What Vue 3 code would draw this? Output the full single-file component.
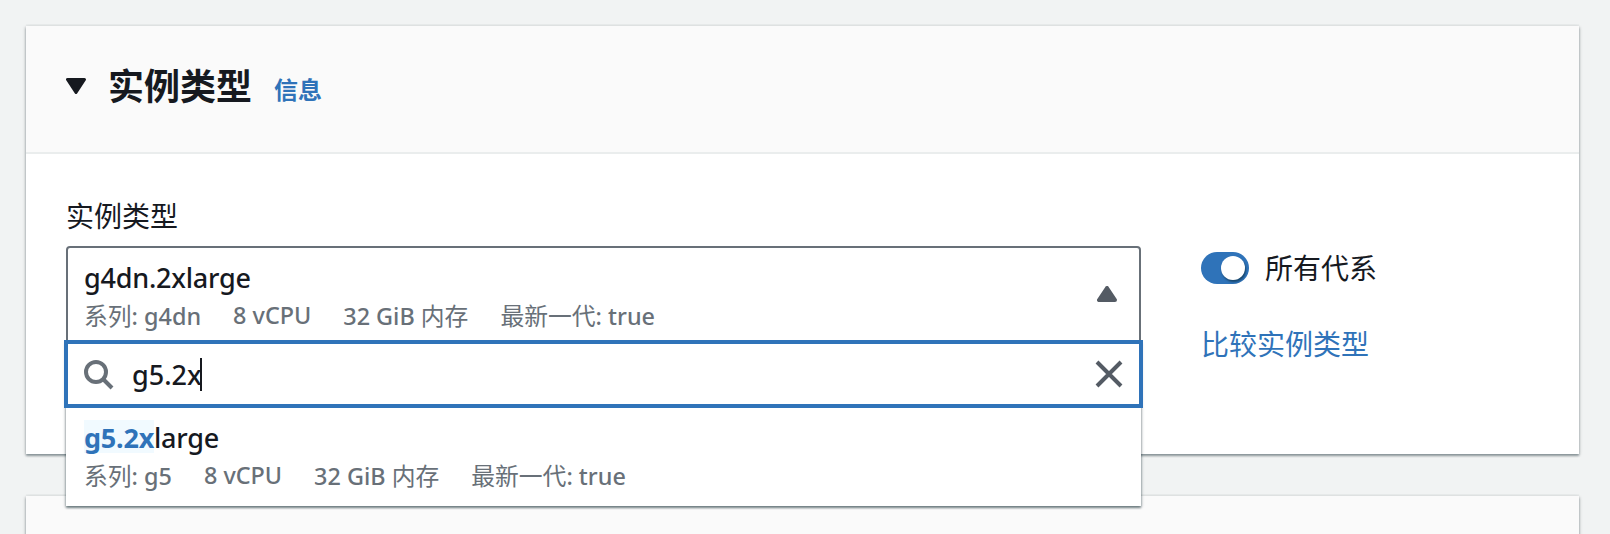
<script setup>
import { ref } from 'vue'

const query = ref('g5.2x')
const rest = 'large'
const selected = {
  name: 'g4dn.2xlarge',
  tags: [
    [{ cjk: '系列' }, { latin: ': g4dn' }],
    [{ latin: '8 vCPU' }],
    [{ latin: '32 GiB ' }, { cjk: '内存' }],
    [{ cjk: '最新一代' }, { latin: ': true' }],
  ],
}
const optionTags = [[{ cjk: '系列' }, { latin: ': g5' }], ...selected.tags.slice(1)]
</script>

<template>
  <main class="page">
    <section class="card first">
      <header class="card-header">
        <svg class="caret" width="20" height="16" viewBox="0 0 20 16"><path d="M1.5 1.5H18.5L10 14.5Z" fill="#16191f" stroke="#16191f" stroke-width="3" stroke-linejoin="round" /></svg>
        <h2>实例类型</h2>
        <a class="info">信息</a>
      </header>
      <div class="card-body">
        <div class="field">
          <label>实例类型</label>
          <div class="select">
            <div class="trigger">
              <div class="option-text">
                <div class="name">{{ selected.name }}</div>
                <div class="tags">
                  <span v-for="(tag, i) in selected.tags" :key="i" class="tag"><span v-for="(part, j) in tag" :key="j" :class="part.cjk ? 'cjk' : 'latin'">{{ part.cjk || part.latin }}</span></span>
                </div>
              </div>
              <svg class="up" width="20" height="16" viewBox="0 0 20 16"><path d="M2 14H18L10 2Z" fill="#545b64" stroke="#545b64" stroke-width="4" stroke-linejoin="round" /></svg>
            </div>
            <div class="dropdown">
              <div class="search">
                <svg class="glass" width="30" height="30" viewBox="0 0 30 30" fill="none" stroke="#687078" stroke-width="4"><circle cx="12" cy="12" r="10" /><path d="M19 19L28 28" /></svg>
                <span class="query">{{ query }}</span><i class="cursor"></i>
                <svg class="close" width="28" height="28" viewBox="0 0 28 28" fill="none" stroke="#545b64" stroke-width="4"><path d="M2 2L26 26M26 2L2 26" /></svg>
              </div>
              <div class="option">
                <div class="name"><mark>{{ query }}</mark>{{ rest }}</div>
                <div class="tags">
                  <span v-for="(tag, i) in optionTags" :key="i" class="tag"><span v-for="(part, j) in tag" :key="j" :class="part.cjk ? 'cjk' : 'latin'">{{ part.cjk || part.latin }}</span></span>
                </div>
              </div>
            </div>
          </div>
        </div>
        <aside class="side">
          <div class="toggle-row"><span class="toggle"><span class="knob"></span></span><span class="toggle-label">所有代系</span></div>
          <a class="compare">比较实例类型</a>
        </aside>
      </div>
    </section>
    <section class="card second"></section>
  </main>
</template>

<style>
body { background: #f2f3f3; overflow: hidden; }
</style>

<style scoped>
* { box-sizing: border-box; }
.page {
  height: 534px;
  overflow: hidden;
  padding: 26px 31px 0 26px;
  background: #f1f3f3;
  color: #16191f;
  font-family: "Noto Sans", "Noto Sans CJK SC", sans-serif;
}
.card {
  background: #fff;
  box-shadow: 0 2px 2px 0 rgba(0, 28, 36, 0.3), 1px 1px 3px 0 rgba(0, 28, 36, 0.15), -1px 1px 3px 0 rgba(0, 28, 36, 0.15), 0 -2px 0 0 #eaeded;
}
.first { height: 428px; }
.second { height: 80px; margin-top: 42px; background: #fafafa; }
.card-header {
  display: flex;
  height: 128px;
  padding-left: 40px;
  background: #fafafa;
  border-bottom: 2px solid #eaeded;
}
.caret { margin-top: 52px; }
h2 { margin: 32px 0 0 22px; font: 700 36px/52px "Noto Sans CJK SC", sans-serif; width: 144px; white-space: nowrap; }
.info { margin: 45px 0 0 22px; font: 700 24px/36px "Noto Sans CJK SC", sans-serif; color: #2f73b9; }
.card-body { display: flex; padding-left: 40px; }
.field { width: 1075px; }
label { display: block; margin-top: 41px; height: 51px; font: 400 28px/40px "Noto Sans CJK SC", sans-serif; }
.select { position: relative; }
.trigger {
  display: flex;
  justify-content: space-between;
  height: 98px;
  padding: 12px 22px 0 16px;
  border: 2px solid #687078;
  border-radius: 4px;
}
.name { font-size: 27px; line-height: 36px; font-weight: 500; letter-spacing: -0.22px; white-space: nowrap; }
.tags { display: flex; gap: 32px; height: 36px; margin-top: 1px; line-height: 36px; color: #687078; white-space: pre; }
.tag { display: flex; align-items: baseline; }
.cjk { font: 400 23.8px/36px "Noto Sans CJK SC", sans-serif; }
.latin { font-size: 23.4px; line-height: 36px; font-weight: 500; }
.up { margin-top: 26px; }
.dropdown {
  position: absolute;
  top: 96px;
  left: 0;
  width: 1075px;
  height: 164px;
  background: #fff;
  box-shadow: 0 2px 2px 0 rgba(0, 28, 36, 0.4), 1px 1px 3px 0 rgba(0, 28, 36, 0.2), -1px 1px 3px 0 rgba(0, 28, 36, 0.2);
}
.search {
  display: flex;
  width: 1079px;
  height: 68px;
  margin: -2px -2px 0;
  padding: 0 16px 0 16px;
  border: 4px solid #2f73b9;
  background: #fff;
}
.glass { margin-top: 16px; }
.query { margin: 12px 0 0 18px; font-size: 27px; line-height: 38px; font-weight: 500; }
.cursor { width: 2px; height: 33px; margin: 14px auto 0 -2px; background: #16191f; }
.close { margin-top: 16px; }
.option { padding: 12px 18px 0; }
mark { display: inline-block; height: 33px; line-height: 36px; background: #f1faff; color: #2f73b9; font-weight: 700; }
.side { margin: 98px 0 0 60px; }
.toggle-row { display: flex; height: 32px; align-items: center; }
.toggle { width: 48px; height: 32px; padding: 4px; border-radius: 16px; background: #2f73b9; }
.knob { display: block; width: 24px; height: 24px; margin-left: 16px; border-radius: 50%; background: #fff; box-shadow: 1px 2px 2px rgba(0, 28, 36, 0.5); }
.toggle-label { margin: -2px 0 0 16px; font: 400 28px/40px "Noto Sans CJK SC", sans-serif; }
.compare { display: block; margin-top: 39px; font: 400 28px/40px "Noto Sans CJK SC", sans-serif; color: #2f73b9; }
</style>
